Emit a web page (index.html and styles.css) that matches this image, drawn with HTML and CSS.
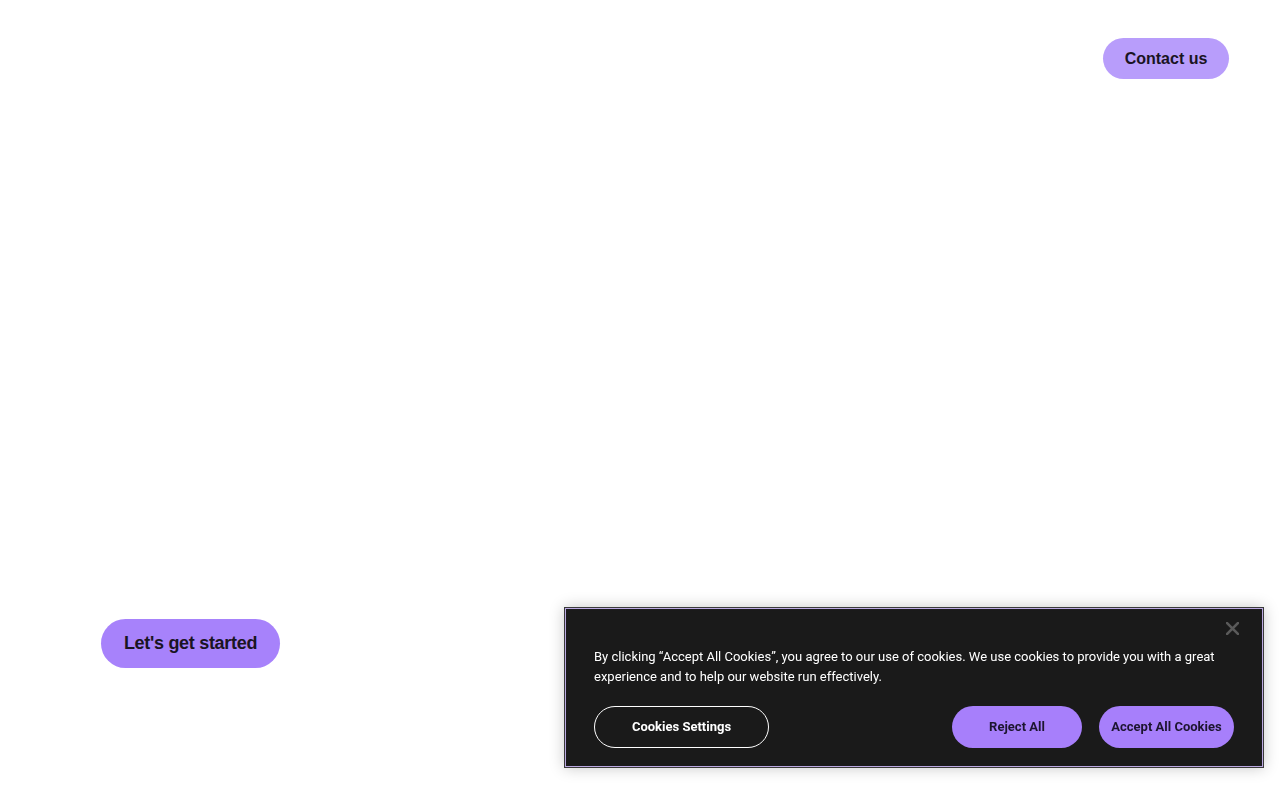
FILE: index.html
```html
<!DOCTYPE html>
<html lang="en">
<head>
<meta charset="utf-8">
<title>Page</title>
<link rel="stylesheet" href="styles.css">
</head>
<body>
<header class="top">
  <a class="btn-contact" href="#">Contact us</a>
</header>
<main class="hero">
  <a class="btn-start" href="#">Let's get started</a>
</main>
<div class="cookie" role="dialog">
  <button class="cookie-close" aria-label="Close">
    <svg width="13" height="13" viewBox="0 0 12 12"><path d="M1 1L11 11M11 1L1 11" stroke="#5a5a5a" stroke-width="2.4" stroke-linecap="square"/></svg>
  </button>
  <p class="cookie-text">By clicking “Accept All Cookies”, you agree to our use of cookies. We use cookies to provide you with a great experience and to help our website run effectively.</p>
  <div class="cookie-actions">
    <button class="cbtn cbtn-outline">Cookies Settings</button>
    <div class="cookie-right">
      <button class="cbtn cbtn-fill cbtn-reject">Reject All</button>
      <button class="cbtn cbtn-fill cbtn-accept">Accept All Cookies</button>
    </div>
  </div>
</div>
</body>
</html>
```

FILE: styles.css
```css
html, body {
  margin: 0;
  padding: 0;
  background: #ffffff;
  height: 100%;
}
body {
  font-family: "Liberation Sans", Arial, sans-serif;
  color: #1a1423;
}
.top {
  display: flex;
  justify-content: flex-end;
  padding: 38px 51px 0 0;
}
.btn-contact {
  display: flex;
  align-items: center;
  justify-content: center;
  width: 126px;
  height: 41px;
  border-radius: 21px;
  background: #b89dfb;
  color: #1a1423;
  font-weight: 700;
  font-size: 16px;
  text-decoration: none;
}
.hero {
  padding: 540px 0 0 101px;
}
.btn-start {
  display: flex;
  align-items: center;
  justify-content: center;
  width: 179px;
  height: 49px;
  border-radius: 25px;
  background: #a782fb;
  color: #1a1423;
  font-weight: 700;
  font-size: 18px;
  letter-spacing: -0.3px;
  text-decoration: none;
}
.cookie {
  position: fixed;
  right: 16px;
  bottom: 32px;
  width: 700px;
  height: 161px;
  box-sizing: border-box;
  background: #1a1a1a;
  border: 1px solid #3a3a3a;
  box-shadow: inset 0 0 0 1px #bba9e2, 0 0 14px rgba(0, 0, 0, 0.22);
  padding: 39px 29px 20px 29px;
  font-family: Roboto, "Liberation Sans", sans-serif;
}
.cookie-close {
  position: absolute;
  top: 10px;
  right: 21px;
  width: 20px;
  height: 20px;
  padding: 0;
  border: 0;
  background: transparent;
  display: flex;
  align-items: center;
  justify-content: center;
}
.cookie-text {
  margin: 0;
  color: #ffffff;
  font-size: 13px;
  line-height: 20px;
  padding-right: 10px;
}
.cookie-actions {
  display: flex;
  justify-content: space-between;
  margin-top: 19px;
}
.cookie-right {
  display: flex;
  gap: 17px;
}
.cbtn {
  height: 42px;
  border-radius: 21px;
  font-family: Roboto, "Liberation Sans", sans-serif;
  font-size: 13px;
  font-weight: 700;
  padding: 0 0 2px 0;
  cursor: pointer;
}
.cbtn-outline {
  width: 175px;
  background: transparent;
  border: 1px solid #ffffff;
  color: #ffffff;
}
.cbtn-fill {
  background: #a77ffb;
  border: 0;
  color: #1d1530;
}
.cbtn-reject {
  width: 130px;
}
.cbtn-accept {
  width: 135px;
}
```
